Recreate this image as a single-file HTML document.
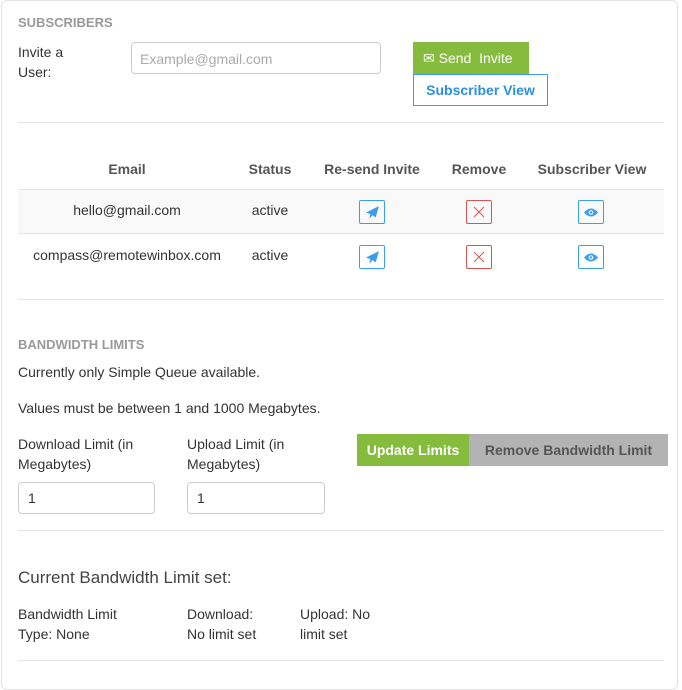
<!DOCTYPE html><html><head><style>
body{margin:0;width:682px;height:676px;background:#fff;font-family:"Liberation Sans",sans-serif;font-size:14px;color:#333;position:relative;overflow:hidden}
.card{position:absolute;left:1px;top:0;width:677px;height:690px;border:1px solid #e3e3e3;border-radius:6px;box-sizing:border-box}
.a{position:absolute;white-space:nowrap}
.hr{position:absolute;left:18px;width:646px;height:1px;background:#e5e5e5}
.h{font-weight:bold;color:#999;font-size:13px}
.inp{position:absolute;border:1px solid #ccc;border-radius:4px;box-sizing:border-box}
.th{font-weight:bold;color:#555;font-size:14px;transform:translateX(-50%)}
.td{transform:translateX(-50%)}
.ib{position:absolute;width:26px;height:24px;border:1px solid #3a9df0;border-radius:2px;box-sizing:border-box;display:flex;align-items:center;justify-content:center}
.ib.r{border-color:#d9534f}
</style></head><body>
<div class="card"></div>
<div class="a h" style="left:18px;top:15px">SUBSCRIBERS</div>
<div class="a" style="left:18px;top:42px;line-height:20px">Invite a<br>User:</div>
<div class="inp" style="left:131px;top:42px;width:250px;height:32px"></div>
<div class="a" style="left:140px;top:51px;color:#aaa">Example@gmail.com</div>
<div class="a" style="left:413px;top:42px;width:116px;height:32px;background:#86bc3d;color:#fff;line-height:32px;font-size:14px"><span style="margin-left:10px">✉ Send&nbsp; Invite</span></div>
<div class="a" style="left:413px;top:74px;width:135px;height:32px;border:1px solid #3a9df0;box-sizing:border-box;color:#2b8fe6;font-weight:bold;line-height:30px;text-align:center">Subscriber View</div>
<div class="hr" style="top:122px"></div>
<div class="a th" style="left:127px;top:161px">Email</div>
<div class="a th" style="left:270px;top:161px">Status</div>
<div class="a th" style="left:372px;top:161px">Re-send Invite</div>
<div class="a th" style="left:479px;top:161px">Remove</div>
<div class="a th" style="left:592px;top:161px">Subscriber View</div>
<div class="a" style="left:18px;top:189px;width:646px;height:45px;background:#f9f9f9;border-top:1px solid #e5e5e5;border-bottom:1px solid #e5e5e5;box-sizing:border-box"></div>
<div class="a td" style="left:127px;top:202px">hello@gmail.com</div>
<div class="a td" style="left:270px;top:202px">active</div>
<div class="a td" style="left:127px;top:247px">compass@remotewinbox.com</div>
<div class="a td" style="left:270px;top:247px">active</div>
<div class="ib" style="left:359px;top:200px"><svg width="15" height="15" viewBox="0 0 14 14"><path d="M13 1L1 7l4 1.5L4 13l3-3.5 3 2z" fill="#3a9df0"/></svg></div>
<div class="ib r" style="left:466px;top:200px"><svg width="12" height="12"><path d="M1 1l10 10M11 1L1 11" stroke="#d9534f" stroke-width="1"/></svg></div>
<div class="ib" style="left:578px;top:200px"><svg width="14" height="11" viewBox="0 0 14 10"><path d="M0 5Q7-3 14 5Q7 13 0 5z" fill="#3a9df0"/><circle cx="7" cy="5" r="2.3" fill="#fff"/><circle cx="7" cy="5" r="1.2" fill="#3a9df0"/></svg></div>
<div class="ib" style="left:359px;top:245px"><svg width="15" height="15" viewBox="0 0 14 14"><path d="M13 1L1 7l4 1.5L4 13l3-3.5 3 2z" fill="#3a9df0"/></svg></div>
<div class="ib r" style="left:466px;top:245px"><svg width="12" height="12"><path d="M1 1l10 10M11 1L1 11" stroke="#d9534f" stroke-width="1"/></svg></div>
<div class="ib" style="left:578px;top:245px"><svg width="14" height="11" viewBox="0 0 14 10"><path d="M0 5Q7-3 14 5Q7 13 0 5z" fill="#3a9df0"/><circle cx="7" cy="5" r="2.3" fill="#fff"/><circle cx="7" cy="5" r="1.2" fill="#3a9df0"/></svg></div>
<div class="hr" style="top:299px"></div>
<div class="a h" style="left:18px;top:337px">BANDWIDTH LIMITS</div>
<div class="a" style="left:18px;top:364px">Currently only Simple Queue available.</div>
<div class="a" style="left:18px;top:400px">Values must be between 1 and 1000 Megabytes.</div>
<div class="a" style="left:18px;top:434px;line-height:20px">Download Limit (in<br>Megabytes)</div>
<div class="a" style="left:187px;top:434px;line-height:20px">Upload Limit (in<br>Megabytes)</div>
<div class="inp" style="left:18px;top:482px;width:137px;height:32px"></div>
<div class="a" style="left:28px;top:490px">1</div>
<div class="inp" style="left:187px;top:482px;width:138px;height:32px"></div>
<div class="a" style="left:197px;top:490px">1</div>
<div class="a" style="left:357px;top:434px;width:112px;height:32px;background:#86bc3d;color:#fff;font-weight:bold;line-height:32px;text-align:center">Update Limits</div>
<div class="a" style="left:469px;top:434px;width:199px;height:32px;background:#b3b3b3;color:#555;font-weight:bold;line-height:32px;text-align:center">Remove Bandwidth Limit</div>
<div class="hr" style="top:530px"></div>
<div class="a" style="left:18px;top:568px;font-size:17px;color:#444">Current Bandwidth Limit set:</div>
<div class="a" style="left:18px;top:604px;line-height:20px">Bandwidth Limit<br>Type: None</div>
<div class="a" style="left:187px;top:604px;line-height:20px">Download:<br>No limit set</div>
<div class="a" style="left:300px;top:604px;line-height:20px">Upload: No<br>limit set</div>
<div class="hr" style="top:660px"></div>
</body></html>
